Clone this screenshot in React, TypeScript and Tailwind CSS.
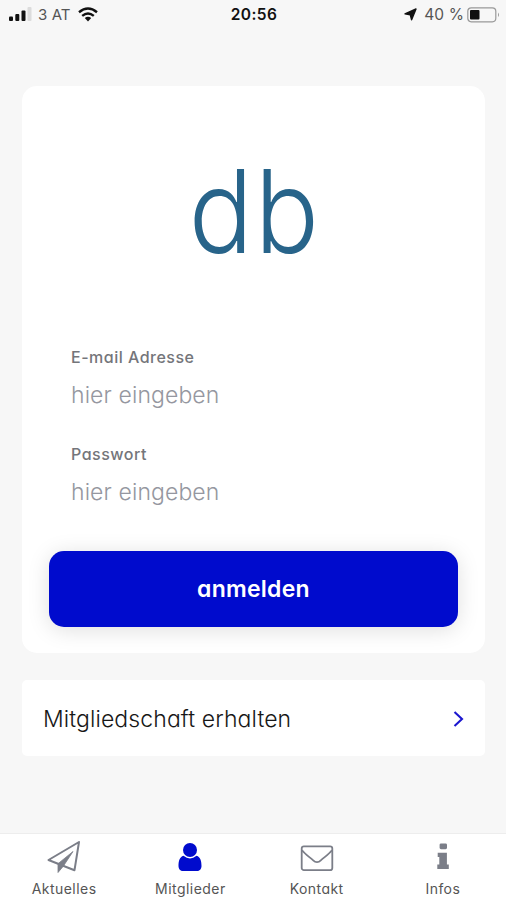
import React from "react";

const poppinsLike = "font-['Inter','Liberation_Sans',sans-serif] [font-feature-settings:'cv11']";

function StatusBar() {
  return (
    <header className="grid h-[28px] grid-cols-3 items-center pt-px text-[15px] leading-none text-[#555]">
      <div className="flex items-center pl-[9px]">
        <svg width="24" height="15" viewBox="0 0 24 15" fill="#111">
          <rect x="0" y="9.5" width="4" height="4.5" rx="1" />
          <rect x="6.3" y="7" width="4" height="7" rx="1" />
          <rect x="12.5" y="3.5" width="4" height="10.5" rx="1" />
          <rect x="18.5" y="0" width="4" height="14" rx="1" fill="#dcdcdc" />
        </svg>
        <span className="ml-[5px] tracking-[0.1px]">3 AT</span>
        <svg className="ml-[7px]" width="20" height="15" viewBox="0 0 20 15" fill="none" stroke="#111" strokeWidth="2.4">
          <path d="M1 5.2Q10-2.2 19 5.2M4.2 8.8Q10 4 15.8 8.8" />
          <path d="M6.8 11Q10 8.3 13.2 11L10 14.5Z" fill="#111" stroke="none" />
        </svg>
      </div>
      <span className="pt-px pl-[2px] text-center text-[15.5px] font-semibold tracking-[0.4px] text-[#111]">20:56</span>
      <div className="flex items-center justify-end pr-[6px]">
        <svg width="13" height="13" viewBox="0 0 13 13" fill="#111" stroke="#111" strokeWidth="1.4" strokeLinejoin="round">
          <path d="M12 1 7.6 11.8 6.3 6.9 1 5.8Z" />
        </svg>
        <span className="ml-[7px] pt-px text-[15.5px] tracking-[0.1px]">40 %</span>
        <svg className="ml-[3px]" width="33" height="16" viewBox="0 0 33 16" fill="none">
          <rect x=".8" y=".8" width="28" height="14" rx="3.5" stroke="#999" strokeWidth="1.2" />
          <rect x="3" y="3" width="9.5" height="9.5" rx="1" fill="#111" />
          <path d="M31 5.5Q33 7.8 31 10Z" fill="#999" />
        </svg>
      </div>
    </header>
  );
}

function Field({ label }: { label: string }) {
  return (
    <div className="h-[97px]">
      <div className="text-[16px] leading-[22px] font-medium tracking-[0.5px] text-[#74757a]">{label}</div>
      <div className="mt-[11px] text-[23px] leading-[32px] font-light tracking-[0.1px] text-[#9597a0]">hier eingeben</div>
    </div>
  );
}

const tabs = [
  {
    label: "Aktuelles",
    icon: (
      <svg width="34" height="34" viewBox="0 0 34 34" fill="none" stroke="#7b7e88" strokeWidth="2" strokeLinejoin="round">
        <path d="M32 2 1.5 20 11 23.7 27.5 30.2Z" />
        <path d="M11 23.7V32.5L16.3 26.2 26 11.5Z" fill="#7b7e88" strokeWidth=".8" />
      </svg>
    ),
  },
  {
    label: "Mitglieder",
    icon: (
      <svg width="34" height="34" viewBox="0 0 34 34" fill="#000bcd">
        <circle cx="17" cy="10" r="7" />
        <path d="M10.5 15.8Q17 21 23.5 15.8C27.5 16.8 28.5 21.5 28.5 26 28.5 29 26.5 31 24 31H10C7.5 31 5.5 29 5.5 26 5.5 21.5 6.5 16.8 10.5 15.8Z" />
      </svg>
    ),
  },
  {
    label: "Kontakt",
    icon: (
      <svg width="34" height="34" viewBox="0 0 34 34" fill="none" stroke="#7b7e88" strokeWidth="1.8">
        <rect x="1.7" y="6.4" width="30.6" height="23.7" rx="2.2" />
        <path d="M2 10.3C5 14 9 16.7 13.2 20.4 15.5 22.8 18.5 22.8 20.8 20.4 25 16.7 29 14 32 10.3" />
      </svg>
    ),
  },
  {
    label: "Infos",
    icon: (
      <svg width="34" height="34" viewBox="0 0 34 34" fill="#7b7e88">
        <rect x="13.6" y="3.4" width="7.4" height="5.8" rx="1.4" />
        <path d="M11.7 12.7H20.9V24.6H22.8V29H11.3V24.6H13.3V17H11.7Z" />
      </svg>
    ),
  },
];

export default function App() {
  return (
    <div className={`flex h-[900px] w-[506px] flex-col overflow-hidden bg-[#f7f7f7] ${poppinsLike}`}>
      <StatusBar />
      <main className="flex flex-1 flex-col px-[22px] pt-[58px]">
        <section className="mr-[-1px] flex h-[567px] flex-col rounded-[15px] bg-white px-[27px]">
          <div className="mt-[65px] flex h-[120px] scale-x-[0.92] justify-center pl-[3px] text-[116px] leading-[120px] font-[350] tracking-[2px] text-[#28648a]">
            db
          </div>
          <div className="mt-[75px] pl-[22px]">
            <Field label="E-mail Adresse" />
            <Field label="Passwort" />
          </div>
          <button className="mt-[11px] h-[76px] shrink-0 rounded-[15px] bg-[#000bcd] pt-px text-[23px] font-semibold tracking-[0.25px] text-white shadow-[0_3px_22px_rgba(0,0,0,0.13)]">
            anmelden
          </button>
        </section>
        <button className="mt-[27px] mr-[-1px] flex h-[76px] items-center justify-between rounded-[5px] bg-white pt-[2px] pr-[21px] pl-[21px] text-[23px] text-[#171717]">
          <span className="font-light tracking-[0.1px]">Mitgliedschaft erhalten</span>
          <svg width="11" height="16" viewBox="0 0 11 16" fill="none" stroke="#1b16cf" strokeWidth="2.1">
            <path d="M1.5 1 9 8 1.5 15" />
          </svg>
        </button>
      </main>
      <nav className="grid h-[67px] grid-cols-4 border-t border-[#ededed] bg-white pl-px">
        {tabs.map(({ label, icon }) => (
          <div key={label} className="flex flex-col items-center pt-[6px]">
            {icon}
            <span className="mt-[5px] text-[14px] leading-[20px] tracking-[0.45px] text-[#555]">{label}</span>
          </div>
        ))}
      </nav>
    </div>
  );
}
